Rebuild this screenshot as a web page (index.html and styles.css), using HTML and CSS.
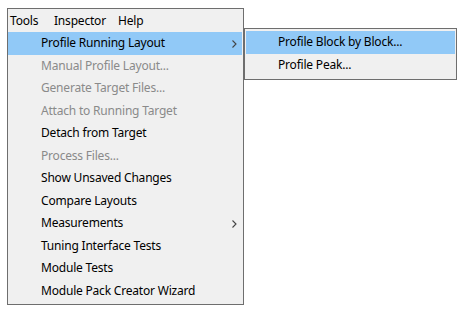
FILE: index.html
```html
<!DOCTYPE html>
<html>
<head>
<meta charset="utf-8">
<link rel="stylesheet" href="styles.css">
</head>
<body>
<div class="stage">
  <div class="menu">
    <div class="menubar">
      <span class="mb-item mb-tools">Tools</span>
      <span class="mb-item mb-inspector">Inspector</span>
      <span class="mb-item">Help</span>
    </div>
    <ul class="dropdown">
      <li class="item active">Profile Running Layout<svg class="chev" width="5" height="8" viewBox="0 0 5 8"><polyline points="0.5,0.5 4,4 0.5,7.5" fill="none" stroke="#444" stroke-width="1.1"/></svg></li>
      <li class="item disabled">Manual Profile Layout...</li>
      <li class="item disabled">Generate Target Files...</li>
      <li class="item disabled">Attach to Running Target</li>
      <li class="item">Detach from Target</li>
      <li class="item disabled">Process Files...</li>
      <li class="item">Show Unsaved Changes</li>
      <li class="item">Compare Layouts</li>
      <li class="item">Measurements<svg class="chev" width="5" height="8" viewBox="0 0 5 8"><polyline points="0.5,0.5 4,4 0.5,7.5" fill="none" stroke="#444" stroke-width="1.1"/></svg></li>
      <li class="item">Tuning Interface Tests</li>
      <li class="item">Module Tests</li>
      <li class="item">Module Pack Creator Wizard</li>
    </ul>
  </div>
  <ul class="submenu">
    <li class="item active">Profile Block by Block...</li>
    <li class="item">Profile Peak...</li>
  </ul>
</div>
</body>
</html>
```
FILE: styles.css
```css
html, body {
  margin: 0;
  padding: 0;
  background: #ffffff;
}
body {
  font-family: "Noto Sans", "Open Sans", sans-serif;
  font-size: 12px;
  letter-spacing: -0.2px;
  color: #000;
}
.stage {
  position: relative;
  width: 464px;
  height: 316px;
  padding: 8px 0 0 7px;
  box-sizing: border-box;
}
.menu {
  width: 237px;
  height: 297px;
  box-sizing: border-box;
  border: 1px solid #6e6e6e;
  background: #f0f0f0;
  display: flex;
  flex-direction: column;
}
.menubar {
  height: 23px;
  display: flex;
  align-items: center;
  padding-left: 2px;
}
.mb-tools {
  width: 44px;
}
.mb-inspector {
  width: 64px;
}
.dropdown, .submenu {
  list-style: none;
  margin: 0;
  padding: 0;
}
.dropdown {
  padding: 0 1px 0 0;
}
.item {
  height: 22.5px;
  line-height: 22px;
  display: flex;
  align-items: center;
  white-space: nowrap;
  position: relative;
}
.dropdown .item {
  padding-left: 33px;
}
.item.active {
  background: #91c9f7;
}
.item.disabled {
  color: #8a8a8a;
}
.chev {
  position: absolute;
  right: 5px;
  top: 8px;
}
.submenu {
  position: absolute;
  left: 244px;
  top: 28px;
  width: 213px;
  height: 52px;
  box-sizing: border-box;
  border: 1px solid #6e6e6e;
  background: #f0f0f0;
  padding: 2px 1px 0 1px;
}
.submenu .item {
  padding-left: 32px;
}
```
